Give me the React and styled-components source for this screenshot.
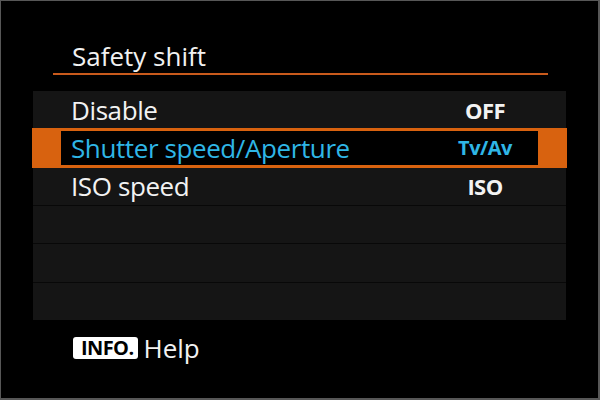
import React from "react";
import styled, { createGlobalStyle } from "styled-components";

const Global = createGlobalStyle`
  html, body { margin: 0; padding: 0; background: #000; }
  * { box-sizing: border-box; }
`;

const Screen = styled.div`
  width: 600px;
  height: 400px;
  background: #000;
  border-style: solid;
  border-color: #575757;
  border-width: 1px 2px 2px 1px;
  font-family: "Open Sans", "Noto Sans", sans-serif;
  color: #f2f2f2;
  display: flex;
  flex-direction: column;
  padding: 39px 0 0 32px;
`;

const Title = styled.div`
  margin-left: 20px;
  width: 495px;
  padding: 0 0 1px 19px;
  font-size: 26px;
  line-height: 32px;
  border-bottom: 2px solid #c95a1c;
`;

const Panel = styled.div`
  margin-top: 16px;
  width: 533px;
  height: 229px;
  background: #080808;
  display: grid;
  grid-template-rows: repeat(6, 1fr);
  gap: 1px;
`;

const Row = styled.div`
  display: flex;
  padding: ${(p) => (p.$selected ? "2px 28px" : "0 28px")};
  background: ${(p) => (p.$selected ? "#d8620f" : "#151515")};
  outline: ${(p) => (p.$selected ? "1px solid #d8620f" : "none")};
  position: relative;
  z-index: ${(p) => (p.$selected ? 1 : 0)};
`;

const Inner = styled.div`
  flex: 1;
  display: flex;
  align-items: center;
  padding-left: 10px;
  background: ${(p) => (p.$selected ? "#000" : "transparent")};
  color: ${(p) => (p.$selected ? "#2fb6e6" : "#f2f2f2")};
`;

const Label = styled.span`
  flex: 1;
  font-size: 26px;
  letter-spacing: -0.4px;
  line-height: 32px;
`;

const Value = styled.span`
  width: 100px;
  margin-right: 3px;
  text-align: center;
  font-weight: 700;
  font-size: ${(p) => (p.$small ? "20px" : "22px")};
  letter-spacing: ${(p) => (p.$small ? "-0.5px" : "-0.6px")};
  line-height: 32px;
`;

const Footer = styled.div`
  margin-top: 17px;
  margin-left: 40px;
  display: flex;
  align-items: center;
  gap: 5px;
  height: 22px;
`;

const Badge = styled.span`
  background: #fff;
  color: #000;
  border-radius: 3px;
  height: 22px;
  padding: 0 5px 0 8px;
  display: flex;
  align-items: center;
  font-weight: 700;
  font-size: 20px;
  letter-spacing: -0.6px;
  line-height: 22px;
`;

const HelpText = styled.span`
  font-size: 26px;
  line-height: 22px;
`;

const items = [
  { label: "Disable", value: "OFF" },
  { label: "Shutter speed/Aperture", value: "Tv/Av", selected: true, small: true },
  { label: "ISO speed", value: "ISO" },
  null,
  null,
  null,
];

export default function App() {
  return (
    <>
      <Global />
      <Screen>
        <Title>Safety shift</Title>
        <Panel>
          {items.map((it, i) => (
            <Row key={i} $selected={it && it.selected}>
              {it && (
                <Inner $selected={it.selected}>
                  <Label>{it.label}</Label>
                  <Value $small={it.small}>{it.value}</Value>
                </Inner>
              )}
            </Row>
          ))}
        </Panel>
        <Footer>
          <Badge>INFO.</Badge>
          <HelpText>Help</HelpText>
        </Footer>
      </Screen>
    </>
  );
}
